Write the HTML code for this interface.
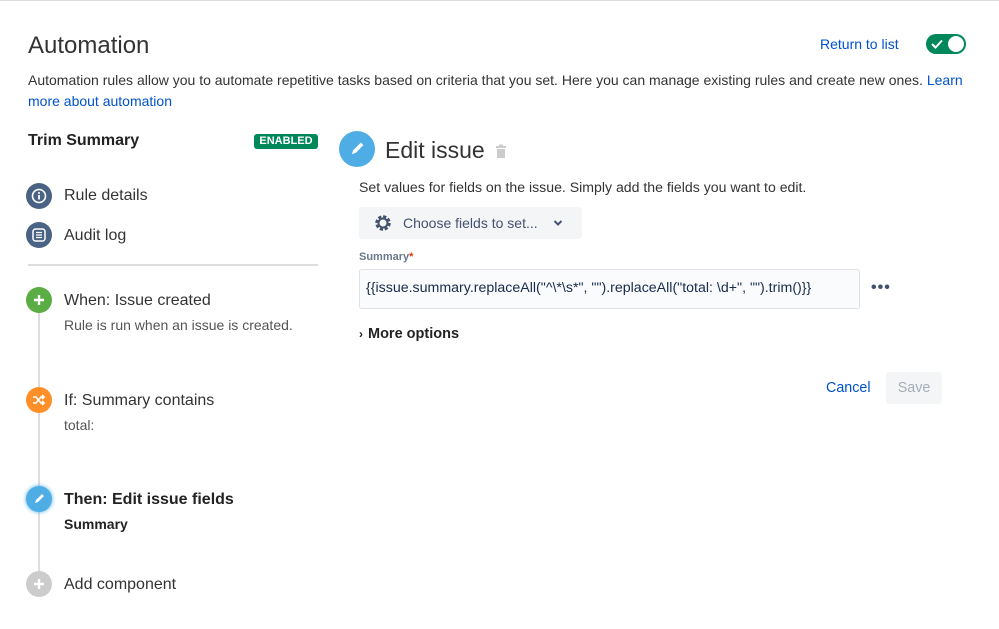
<!DOCTYPE html>
<html><head><style>
body{margin:0;width:999px;height:629px;background:#fff;font-family:"Liberation Sans",sans-serif;color:#333;position:relative;overflow:hidden}
.a{position:absolute;white-space:nowrap}
.c{position:absolute;width:26px;height:26px;border-radius:50%;display:flex;align-items:center;justify-content:center}
.seg{font-family:"Liberation Sans",sans-serif;font-size:16px}
</style></head><body>
<div class="a" style="left:0;top:0;width:999px;height:1px;background:#ddd"></div>
<div class="a" style="left:28px;top:32px;font-size:24px;color:#333">Automation</div>
<div class="a" style="left:820px;top:36px;font-size:14px;color:#0052cc">Return to list</div>
<div class="a" style="left:926px;top:34px;width:40px;height:20px;border-radius:10px;background:#00875a">
 <svg class="a" style="left:5px;top:5px" width="12" height="10" viewBox="0 0 12 10"><path d="M1 5l3.5 3.5L11 1.5" stroke="#fff" stroke-width="2" fill="none"/></svg>
 <div class="a" style="left:22px;top:2px;width:16px;height:16px;border-radius:50%;background:#fff"></div></div>
<div class="a" style="left:28px;top:70px;font-size:14px;line-height:21px;color:#333;white-space:normal;width:950px">Automation rules allow you to automate repetitive tasks based on criteria that you set. Here you can manage existing rules and create new ones. <span style="color:#0052cc">Learn more about automation</span></div>

<div class="a" style="left:28px;top:132px;font-size:16px;font-weight:bold;color:#222">Trim Summary</div>
<div class="a" style="left:254px;top:134px;width:64px;height:15px;background:#00875a;border-radius:3px;color:#fff;font-size:11px;font-weight:bold;text-align:center;line-height:15px">ENABLED</div>

<div class="c" style="left:26px;top:183px;background:#4a6283"><svg width="16" height="16" viewBox="0 0 16 16"><circle cx="8" cy="8" r="6.5" stroke="#fff" stroke-width="1.6" fill="none"/><rect x="7.1" y="7" width="1.8" height="4.5" fill="#fff"/><circle cx="8" cy="5" r="1" fill="#fff"/></svg></div>
<div class="a seg" style="left:64px;top:187px">Rule details</div>
<div class="c" style="left:26px;top:222px;background:#4a6283"><svg width="16" height="16" viewBox="0 0 16 16"><rect x="2" y="2" width="12" height="12" rx="2.5" stroke="#fff" stroke-width="1.5" fill="none"/><path d="M5 5.5h6M5 8h6M5 10.5h6" stroke="#fff" stroke-width="1.2"/></svg></div>
<div class="a seg" style="left:64px;top:227px">Audit log</div>
<div class="a" style="left:28px;top:264px;width:290px;height:2px;background:#ddd"></div>

<div class="a" style="left:38px;top:300px;width:2px;height:285px;background:#ddd"></div>
<div class="c" style="left:26px;top:287px;background:#5aac44"><svg width="12" height="12"><path d="M6 1v10M1 6h10" stroke="#fff" stroke-width="2.4"/></svg></div>
<div class="a seg" style="left:64px;top:292px">When: Issue created</div>
<div class="a" style="left:64px;top:317px;font-size:14px;color:#555">Rule is run when an issue is created.</div>

<div class="c" style="left:26px;top:387px;background:#ff8f29"><svg width="14" height="12" viewBox="0 0 14 12"><path d="M1 3h3l5 6h3M1 9h3l5-6h3M10 1l2 2-2 2M10 7l2 2-2 2" stroke="#fff" stroke-width="1.6" fill="none"/></svg></div>
<div class="a seg" style="left:64px;top:392px">If: Summary contains</div>
<div class="a" style="left:64px;top:417px;font-size:14px;color:#555">total:</div>

<div class="c" style="left:26px;top:486px;background:#4fade6;box-shadow:0 0 4px #4fade6"><svg width="14" height="14" viewBox="0 0 14 14"><path d="M3 11l1-3 6-6 2 2-6 6z" fill="#fff"/></svg></div>
<div class="a seg" style="left:64px;top:491px;font-weight:bold;color:#222">Then: Edit issue fields</div>
<div class="a" style="left:64px;top:516px;font-size:14px;font-weight:bold;color:#222">Summary</div>

<div class="c" style="left:26px;top:571px;background:#ccc"><svg width="12" height="12"><path d="M6 1v10M1 6h10" stroke="#fff" stroke-width="2.4"/></svg></div>
<div class="a seg" style="left:64px;top:576px">Add component</div>

<div class="a" style="left:339px;top:131px;width:36px;height:36px;border-radius:50%;background:#4fade6"><svg class="a" style="left:9px;top:9px" width="18" height="18" viewBox="0 0 14 14"><path d="M3 11l1-3 6-6 2 2-6 6z" fill="#fff"/></svg></div>
<div class="a" style="left:385px;top:137px;font-size:23px;color:#333">Edit issue</div>
<svg class="a" style="left:495px;top:144px" width="12" height="14" viewBox="0 0 12 14"><rect x="1" y="2" width="10" height="2" fill="#ccc"/><rect x="4" y="0.5" width="4" height="2" fill="#ccc"/><rect x="2" y="5" width="8" height="9" fill="#ccc"/></svg>
<div class="a" style="left:359px;top:179px;font-size:14.1px">Set values for fields on the issue. Simply add the fields you want to edit.</div>
<div class="a" style="left:359px;top:207px;width:223px;height:32px;background:#f4f5f7;border-radius:3px"></div>
<svg class="a" style="left:373px;top:213px" width="20" height="20" viewBox="0 0 20 20"><circle cx="10" cy="10" r="6" stroke="#42526e" stroke-width="3.5" fill="none" stroke-dasharray="3 1.7"/><circle cx="10" cy="10" r="4.5" stroke="#42526e" stroke-width="2" fill="none"/></svg>
<div class="a" style="left:403px;top:215px;font-size:14px;color:#42526e">Choose fields to set...</div>
<svg class="a" style="left:553px;top:219px" width="10" height="8"><path d="M1.5 2l3.5 3.5L8.5 2" stroke="#42526e" stroke-width="2" fill="none"/></svg>
<div class="a" style="left:359px;top:251px;font-size:11px;font-weight:bold;color:#6b778c">Summary<span style="color:#de350b">*</span></div>
<div class="a" style="left:359px;top:269px;width:499px;height:38px;border:1px solid #dfe1e6;background:#fafbfc;border-radius:3px"></div>
<div class="a" style="left:366px;top:280px;font-size:14.2px;color:#172b4d">{{issue.summary.replaceAll("^\*\s*", "").replaceAll("total: \d+", "").trim()}}</div>
<div class="a" style="left:871px;top:279px;font-size:16px;color:#42526e;font-weight:bold;letter-spacing:1px">•••</div>
<div class="a" style="left:359px;top:326px;font-size:14.5px;font-weight:bold;color:#222"><span style="font-size:12px;margin-right:5px">›</span>More options</div>
<div class="a" style="left:826px;top:380px;font-size:14.3px;color:#0052cc">Cancel</div>
<div class="a" style="left:886px;top:372px;width:56px;height:32px;background:#f4f5f7;border-radius:3px;color:#a5adba;font-size:14.3px;text-align:center;line-height:32px">Save</div>
</body></html>
